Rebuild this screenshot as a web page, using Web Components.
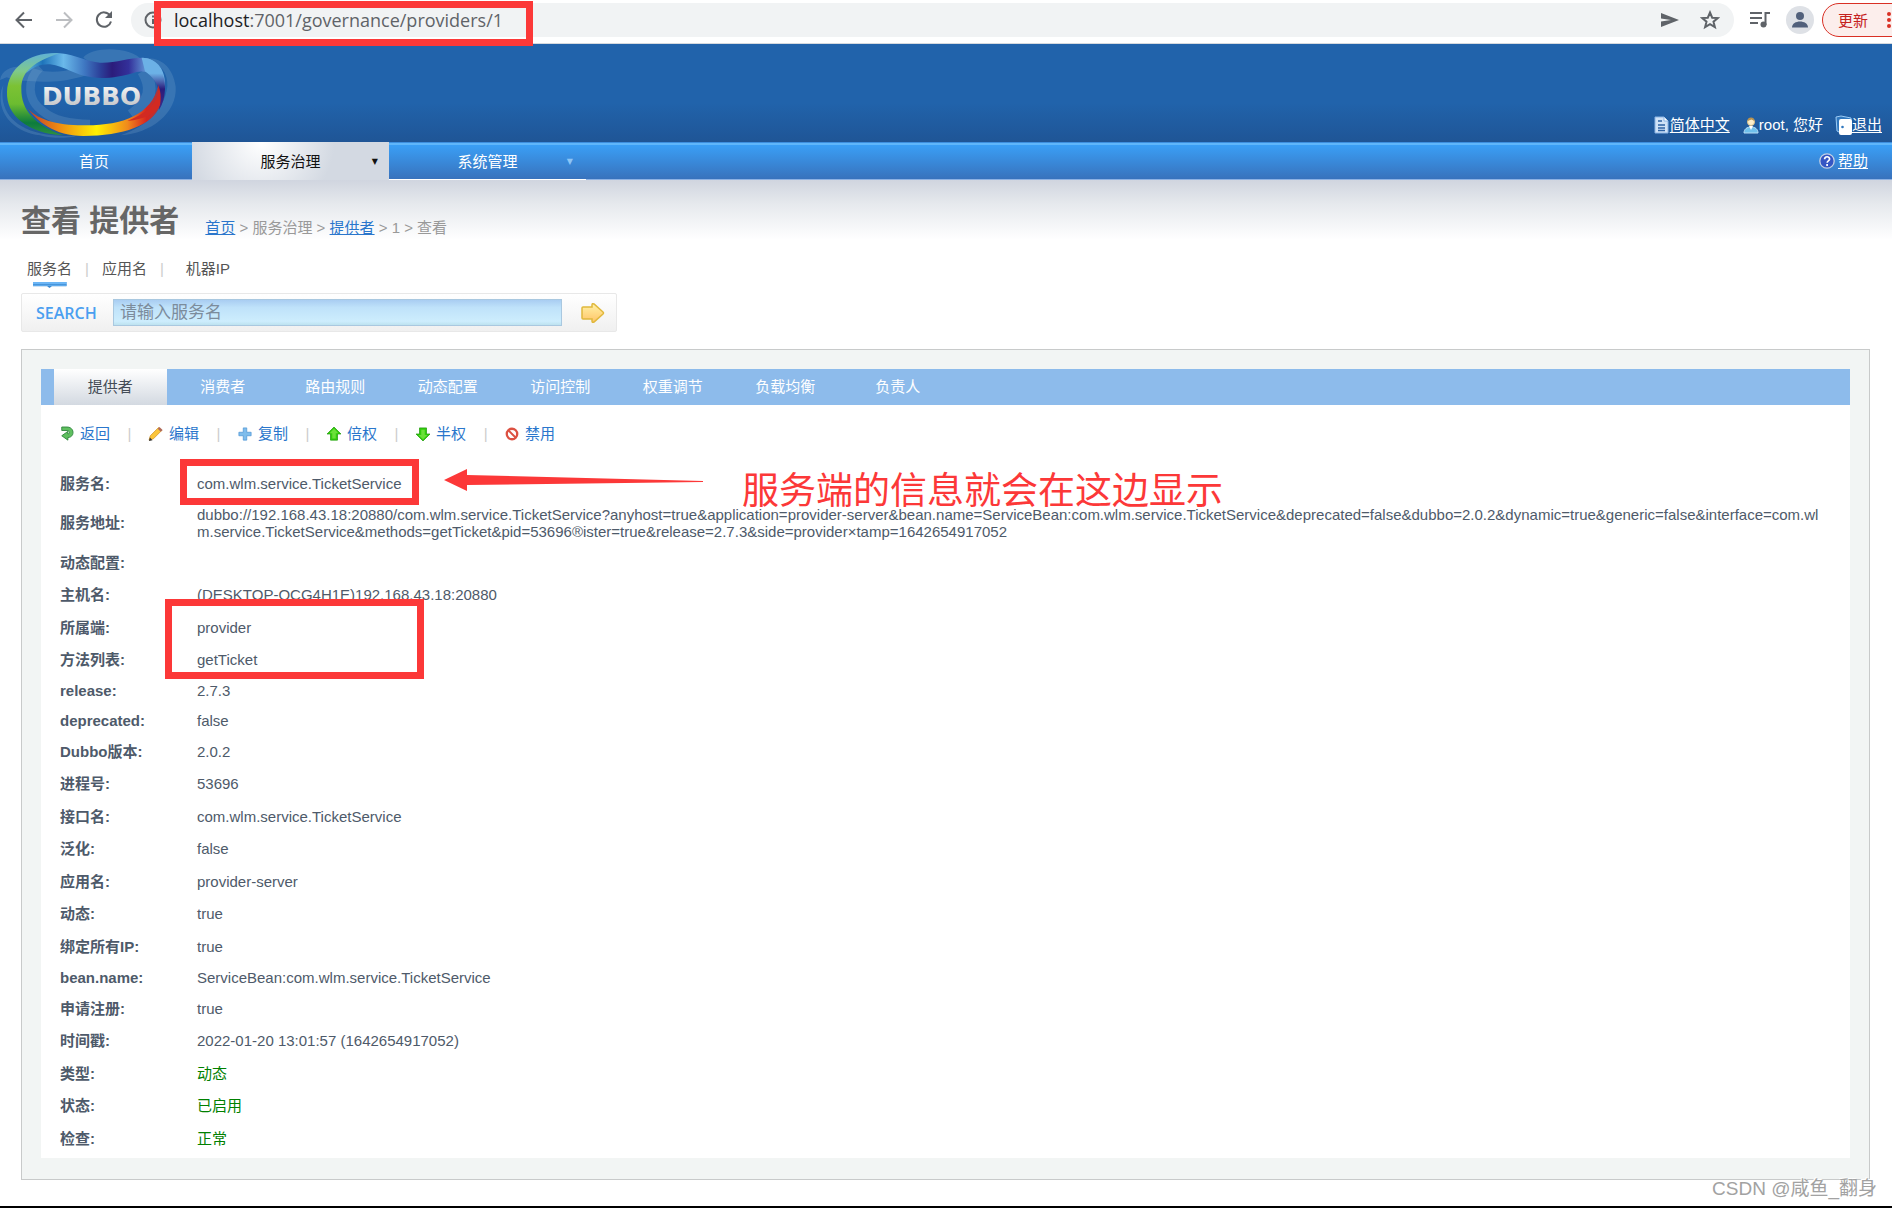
<!DOCTYPE html>
<html lang="zh-CN">
<head>
<meta charset="utf-8">
<title>Dubbo 查看 提供者</title>
<style>
  html, body { margin: 0; }
  body {
    --cjk: "Noto Sans CJK SC", sans-serif;
    --ink: #4e5a6a;
    --blue: #2a76cc;
    --mark: #fc3838;
    font: 15px/20px "Liberation Sans", var(--cjk);
    color: var(--ink);
    background: #fff;
  }
</style>
</head>
<body>
<governance-page></governance-page>

<script>
const define = (name, html, setup) => {
  const template = document.createElement('template');
  template.innerHTML = html;
  customElements.define(name, class extends HTMLElement {
    constructor() {
      super();
      this.attachShadow({ mode: 'open' }).append(template.content.cloneNode(true));
    }
    connectedCallback() { if (setup) setup(this, this.shadowRoot); }
  });
};

/* Small pictograms used by links and toolbar actions */
const ICONS = {
  doc: '<path d="M1 0h9l4 4v12H1z" fill="#cfe2f7" stroke="#8bb4e4"/><path d="M10 0v4h4" fill="#fff" stroke="#8bb4e4"/><path d="M4 4h4M4 8h7M4 11h7M4 13.500h7" stroke="#2c62a4" stroke-width="1.500"/>',
  user: '<path d="M1 16c0-4 3-6 7-6s7 2 7 6z" fill="#6fc0ec" stroke="#b9def5"/><path d="M6 9l2 4 2-4z" fill="#fff"/><circle cx="8" cy="5" r="3.500" fill="#fbeecb" stroke="#d8c08a"/><path d="M4.500 4a3.500 3.500 0 0 1 7 0L8.500 2.500z" fill="#b8924e"/>',
  door: '<path d="M0 0l5-1 10 2v3H5v12l-4-2z" fill="#2f77be" stroke="#9dccf5"/><rect x="3" y="2" width="13" height="16" rx="2" fill="#fff"/><circle cx="6.500" cy="10" r="1.300" fill="#2f77be"/>',
  help: '<circle cx="8" cy="8" r="7.200" fill="#3556c4" stroke="#c3d0e4" stroke-width="1.300"/><path d="M5.600 6.300c0-3.400 5-3.300 5-.3 0 1.900-2.400 1.800-2.400 3.700M8.100 11v2" fill="none" stroke="#fff" stroke-width="1.700"/>',
  back: '<path d="M2 0h6c9 0 9 12 1 12v3L2 10l7-5v3c3 0 2-4-1-4H2z" fill="#5fbf5f" stroke="#2b843a"/>',
  edit: '<path d="M0 15l1.500-5L11 0.500l3.500 3.500L5 13.500z" fill="#fbc53a" stroke="#d18c1b" stroke-width=".8"/><path d="M10 2l2-2 3.500 3.500-2 2z" fill="#b06a5a"/><path d="M0 16l1-4 3 3z" fill="#333"/>',
  copy: '<path d="M6 1h4v5h5v4h-5v5H6v-5H1V6h5z" fill="#7fbdec" stroke="#4a94d4" stroke-width=".8"/>',
  up: '<path d="M8 0l8 8h-4v7H4V8H0z" fill="#33cc0c" stroke="#1c9a08" stroke-width=".8"/><path d="M8 2l5 5h-3v6H6V7H3z" fill="#6be03a"/>',
  down: '<path d="M8 16l8-8h-4V1H4v7H0z" fill="#33cc0c" stroke="#1c9a08" stroke-width=".8"/><path d="M8 14l5-5h-3V3H6v6H3z" fill="#6be03a"/>',
  ban: '<circle cx="8" cy="8" r="6" fill="#fff" stroke="#dc5142" stroke-width="2.600"/><path d="M4 4l8 8" stroke="#dc5142" stroke-width="2.200"/>'
};

define('pict-icon', `
<style>:host{display:inline-flex;width:var(--pict,16px);height:var(--pict,16px);flex:none}svg{width:100%;height:100%;overflow:visible}</style>
<svg viewBox="0 0 16 16" fill="none" aria-hidden="true"></svg>`,
(el, root) => { root.querySelector('svg').innerHTML = ICONS[el.getAttribute('name')]; });

define('icon-link', `
<style>
  :host{display:flex;align-items:center}
  a{color:inherit;display:flex;align-items:center;gap:var(--icon-gap,0px);text-decoration:none}
  span.text{text-decoration:var(--deco,underline);text-underline-offset:2px}
  :host([plain]) span.text{text-decoration:none}
</style>
<a href="#"><pict-icon></pict-icon><span class="text"><slot></slot></span></a>`,
(el, root) => {
  const icon = document.createElement('pict-icon');
  icon.setAttribute('name', el.getAttribute('icon'));
  root.querySelector('pict-icon').replaceWith(icon);
});

define('browser-bar', `
<style>
  :host{display:flex;align-items:center;height:43px;border-bottom:1px solid #d5d9de;background:#fff;overflow:hidden;color:#5f6368}
  .inner{display:flex;align-items:center;flex:1;height:34px;margin-bottom:3px}
  button{border:0;background:none;padding:0;display:flex;align-items:center;justify-content:center;width:40px;height:34px;flex:none}
  nav{display:flex;padding:0 7px 0 4px}
  .omni{flex:1;height:34px;border-radius:17px;background:#f1f3f4;display:flex;align-items:center;box-sizing:border-box;padding:0 4px 0 10px;min-width:0}
  .url{flex:1;margin-left:15px;font:18px/24px "Open Sans","Noto Sans",sans-serif;white-space:nowrap;outline:0}
  .url b{font-weight:400;color:#202124}
  .tools{display:flex;padding-left:6px}
  .avatar{width:28px;height:28px;border-radius:50%;background:#dee1e6;margin:3px 8px 0 6px;overflow:hidden}
  .update{width:96px;margin-right:-26px;border:1px solid #d93025;border-radius:17px;background:#fceeec;color:#c5221f;font:15px/20px "Noto Sans CJK SC",sans-serif;justify-content:flex-start;padding-left:15px;gap:18px}
</style>
<div class="inner">
<nav>
  <button aria-label="后退"><svg width="18" height="18" fill="none" stroke="#5f6368" stroke-width="2"><path d="M17 9H2M9 1.500L1.500 9 9 16.500"/></svg></button>
  <button aria-label="前进"><svg width="18" height="18" fill="none" stroke="#bcbec1" stroke-width="2"><path d="M1 9h15M9 1.500L16.500 9 9 16.500"/></svg></button>
  <button aria-label="刷新"><svg width="18" height="18" fill="none" stroke="#5f6368" stroke-width="2"><path d="M15 4.500A7.200 7.200 0 1 0 16 10.500"/><path d="M17 0v7h-7z" fill="#5f6368" stroke="none"/></svg></button>
</nav>
<div class="omni">
  <svg width="18" height="18" fill="none" stroke="#5f6368" stroke-width="2" overflow="visible"><circle cx="12" cy="9" r="7.500"/><path d="M12 8v5M12 4.500v2"/></svg>
  <div class="url" role="textbox" aria-label="地址" contenteditable="true" spellcheck="false"><b>localhost</b>:7001/governance/providers/1</div>
  <button aria-label="发送"><svg width="18" height="16"><path d="M0 1l18 7-18 7V9.500L10 8 0 6.500z" fill="#5f6368"/></svg></button>
  <button aria-label="收藏"><svg width="20" height="20" fill="none" stroke="#5f6368" stroke-width="2"><path d="M10 2.500l2.200 5.200 5.600.4-4.300 3.600 1.400 5.500L10 14.200l-4.900 3 1.400-5.500L2.200 8.100l5.600-.4z"/></svg></button>
</div>
<div class="tools">
  <button aria-label="媒体"><svg width="20" height="18" fill="none" stroke="#5f6368" stroke-width="2"><path d="M0 2h12M0 7h12M0 12h8M20 2h-4.500v12"/><circle cx="13.500" cy="13.500" r="3" fill="#5f6368" stroke="none"/></svg></button>
  <button class="avatar" aria-label="用户"><svg width="28" height="28"><circle cx="14" cy="10" r="4" fill="#51607b"/><path d="M6 21.500c0-8 16-8 16 0z" fill="#51607b"/></svg></button>
  <button class="update">更新<svg width="6" height="18" fill="#d93025"><circle cx="3" cy="3" r="2"/><circle cx="3" cy="9" r="2"/><circle cx="3" cy="15" r="2"/></svg></button>
</div>
</div>`);

define('dubbo-logo', `
<style>:host{display:block;width:180px;height:98px}svg{display:block}text{font:bold 74px "DejaVu Sans",sans-serif}</style>
<svg width="180" height="98" viewBox="0 12 540 294" role="img" aria-label="Dubbo">
  <defs>
    <linearGradient id="g" x1="0" y1="0" x2="0" y2="1"><stop offset="0" stop-color="#5fb1d6"/><stop offset=".22" stop-color="#7fc98c"/><stop offset=".4" stop-color="#7cc234"/><stop offset=".62" stop-color="#6cbc30"/><stop offset=".85" stop-color="#0c7b3d"/><stop offset="1" stop-color="#2f9040"/></linearGradient>
    <linearGradient id="b"><stop offset="0" stop-color="#5fb1d6"/><stop offset=".12" stop-color="#1e74bb"/><stop offset=".27" stop-color="#6ab9ea"/><stop offset=".42" stop-color="#3f78c2"/><stop offset=".54" stop-color="#2b3e98"/><stop offset=".62" stop-color="#2b1c7b"/><stop offset=".74" stop-color="#33309a"/><stop offset=".9" stop-color="#6cb1e6"/><stop offset="1" stop-color="#6cb1e6"/></linearGradient>
    <linearGradient id="v" x1="0" y1="0" x2="0" y2="1"><stop offset="0" stop-color="#6cb1e6"/><stop offset=".3" stop-color="#6cb1e6"/><stop offset=".6" stop-color="#2b1c7b"/><stop offset="1" stop-color="#3b2c8b"/></linearGradient>
    <linearGradient id="r"><stop offset="0" stop-color="#b8352c"/><stop offset=".25" stop-color="#ee8a12"/><stop offset=".53" stop-color="#fff000"/><stop offset=".76" stop-color="#f08a1c"/><stop offset=".9" stop-color="#d8261f"/><stop offset="1" stop-color="#a33a44"/></linearGradient>
    <linearGradient id="t" x1="0" y1="0" x2="0" y2="1"><stop offset="0" stop-color="#fff"/><stop offset="1" stop-color="#b9bcc0"/></linearGradient>
  </defs>
  <g fill="#8fb4d6" fill-opacity=".22">
    <path d="M0 120C8 78 60 72 110 88c60 20 120-5 170-15l-30-20C270 20 390 15 428 62l-60 30C300 80 230 130 130 125 90 125 50 122 20 112z"/>
    <path d="M10 135C-5 210 40 275 160 286c30 3 50 3 70 0-2 8-70 12-110 0C40 275-10 220 4 150z"/>
    <path d="M435 55c50-5 85 30 92 85 5 80-75 140-165 146 80-30 130-75 140-146 3-40-20-70-67-85z"/>
  </g>
  <g fill="none" stroke="#8fb4d6" stroke-opacity=".22">
    <path d="M120 82C80 120 80 180 130 215c30 25 80 37 140 37" stroke-width="26"/>
    <path d="M430 92c30 50 25 90-35 135" stroke-width="38"/>
  </g>
  <path d="M78 100C105 50 140 37 180 40c50 5 80 26 120 28 45 2 85-15 130-15 45 5 68 40 64 85-25-30-50-50-84-42C355 112 315 118 275 112 220 105 195 78 150 73c-25-2-50 8-72 27z" fill="url(#b)"/>
  <path d="M180 39C90 34 25 80 21 155c-3 70 60 125 170 131-85-30-128-75-127-140C64 105 85 70 180 39z" fill="url(#g)"/>
  <path d="M75 195c30 45 100 62 180 61 110 1 200-30 220-120l5 60c-20 60-110 92-230 92C165 288 110 245 75 195z" fill="url(#r)"/>
  <path d="M425 53c45 0 72 40 70 95-1 25-7 45-18 62 5-50 2-85-42-116z" fill="url(#v)"/>
  <path d="M474 135c5 50-25 80-92 108 50-5 85-20 98-47 4-25 2-45-6-61z" fill="#d22a22"/>
  <text x="126" y="194" fill="url(#t)">DUBBO</text>
</svg>`);

define('site-header', `
<style>
  :host{display:flex;justify-content:space-between;align-items:flex-end;height:98px;background:linear-gradient(#2163ab 60%,#1f5596);color:#fff}
  .links{display:flex;gap:13px;padding:0 10px 7px 0}
</style>
<dubbo-logo></dubbo-logo>
<div class="links">
  <icon-link icon="doc">简体中文</icon-link>
  <icon-link icon="user" plain>root, 您好</icon-link>
  <icon-link icon="door">退出</icon-link>
</div>`);

define('site-nav', `
<style>
  :host{display:flex;height:38px;box-sizing:border-box;border-top:1px solid #3d8fdf;border-bottom:1px solid #8db1e3;background:linear-gradient(#5fb6fb 2px,#3a9ff6 2px,#3872bc);color:#fff;justify-content:space-between}
  nav{display:flex;margin-bottom:-1px;margin-top:-1px}
  a.item{display:grid;grid-template-columns:1fr 60px 1fr;align-items:center;width:197px;box-sizing:border-box;color:inherit;text-decoration:none;white-space:nowrap;padding-top:1px}
  a.item:first-child{width:192px;padding-right:4px;display:flex;justify-content:center}
  a i{font:normal 8px/20px "DejaVu Sans";justify-self:end;padding-right:11px;color:#8cc5f6}
  a.sub i{padding-right:13px}
  a.on{color:#111;background:radial-gradient(circle at 35% 0,#fff,#d3d9e2 55%)}
  a.on i{color:#111}
  a.sub{border-bottom:1px solid #fff;padding-top:3px}
  .help{padding:0 24px 0 0;--icon-gap:3px;display:flex}
</style>
<nav><a class="item" href="#">首页</a><a class="item on" href="#"><span></span>服务治理<i>▼</i></a><a class="item sub" href="#"><span></span>系统管理<i>▼</i></a></nav>
<icon-link class="help" icon="help">帮助</icon-link>`);

define('page-heading', `
<style>
  :host{display:flex;gap:26px;height:44px}
  h1{margin:0;font:bold 30px/46px "Liberation Sans","Noto Sans CJK SC",sans-serif;color:#666;white-space:nowrap}
  p{margin:0;color:#999;white-space:nowrap;padding-top:20px}
  ::slotted(a){color:var(--blue)}
</style>
<h1><slot name="title"></slot></h1><p><slot></slot></p>`);

define('service-search', `
<style>
  :host{display:block}
  ul{list-style:none;margin:0;padding:0 0 0 6px;display:flex;height:36px;color:#555}
  li{display:flex;line-height:20px;padding-top:2px}
  li+li::before{content:"|";color:#ccc;padding:0 13px}
  li:last-child::before{padding-right:22px}
  a{color:inherit;text-decoration:none;display:flex;flex-direction:column;align-items:center}
  a.on::after{content:"";width:34px;height:6px;margin-top:3px;background:linear-gradient(#6bb5f5 2px,#3c8bd2 2px,#6bb5f5 4px,transparent 4px),#3c8bd2;clip-path:polygon(0 0,100% 0,100% 70%,57% 70%,50% 100%,43% 70%,0 70%)}
  form{display:flex;align-items:center;width:596px;height:39px;box-sizing:border-box;border:1px solid #e8e8e8;border-radius:2px;background:linear-gradient(#fff,#f0f0f0);padding-left:14px}
  label{font:600 16px/20px "Open Sans",sans-serif;color:#4a9ff0;width:77px}
  input{width:449px;height:27px;box-sizing:border-box;border:1px solid #a9c8e0;padding:1px 6px 0;margin:0;background:linear-gradient(#a9cdf2,#bfe2fa 30%,#cdedfd 85%,#bde2ef);font:17px/24px "Liberation Sans","Noto Sans CJK SC",sans-serif;border-radius:0}
  input::placeholder{color:#7c8c9c}
  button{border:0;background:none;padding:0;margin-left:19px;display:flex}
</style>
<ul><li><a class="on" href="#">服务名</a></li><li><a href="#">应用名</a></li><li><a href="#">机器IP</a></li></ul>
<form onsubmit="return false"><label for="q">SEARCH</label><input id="q" placeholder="请输入服务名">
<button aria-label="搜索"><svg width="24" height="20"><defs><linearGradient id="a" x1="0" y1="0" x2="0" y2="1"><stop offset="0" stop-color="#fff2a8"/><stop offset="1" stop-color="#ffc468"/></linearGradient></defs><path d="M1 5q0-1 1-1h9V2q0-2 2-1l9 8q1 1 0 2l-9 8q-2 1-2-1v-2H2q-1 0-1-1z" fill="url(#a)" stroke="#e0b83c" stroke-width="1.500"/></svg></button></form>`);

define('tab-strip', `
<style>
  :host{display:block;background:#8dbbeb;padding-left:13px}
  nav{display:grid;grid-template-columns:repeat(8,1fr);width:900px;height:36px}
  ::slotted(a){display:flex;align-items:center;justify-content:center;color:#fff;text-decoration:none}
  ::slotted(a[aria-current]){color:#444c56;background:linear-gradient(#fff,#d3d9e1)}
</style>
<nav><slot></slot></nav>`);

define('action-bar', `
<style>
  :host{display:flex;height:20px;color:var(--blue);--pict:14px;--icon-gap:6px;--deco:none}
  ::slotted(icon-link:not(:last-child))::after{content:"|";color:#ccc;font-size:15px;width:39px;text-align:center}
</style><slot></slot>`);

const ROWS = [
  ['服务名:', 'com.wlm.service.TicketService'],
  ['服务地址:', 'dubbo://192.168.43.18:20880/com.wlm.service.TicketService?anyhost=true&application=provider-server&bean.name=ServiceBean:com.wlm.service.TicketService&deprecated=false&dubbo=2.0.2&dynamic=true&generic=false&interface=com.wlm.service.TicketService&methods=getTicket&pid=53696®ister=true&release=2.7.3&side=provider×tamp=1642654917052', 'tall'],
  ['动态配置:', ''],
  ['主机名:', '(DESKTOP-QCG4H1E)192.168.43.18:20880'],
  ['所属端:', 'provider'],
  ['方法列表:', 'getTicket'],
  ['release:', '2.7.3', 'latin'],
  ['deprecated:', 'false', 'latin'],
  ['Dubbo版本:', '2.0.2'],
  ['进程号:', '53696'],
  ['接口名:', 'com.wlm.service.TicketService'],
  ['泛化:', 'false'],
  ['应用名:', 'provider-server'],
  ['动态:', 'true'],
  ['绑定所有IP:', 'true'],
  ['bean.name:', 'ServiceBean:com.wlm.service.TicketService', 'latin'],
  ['申请注册:', 'true'],
  ['时间戳:', '2022-01-20 13:01:57 (1642654917052)'],
  ['类型:', '动态', 'ok'],
  ['状态:', '已启用', 'ok'],
  ['检查:', '正常', 'ok']
];

define('provider-table', `
<style>
  :host{display:block}
  table{border-collapse:collapse;width:100%;table-layout:fixed}
  th,td{padding:0;height:32px;line-height:17px;text-align:left;vertical-align:middle}
  th{width:137px;font-weight:bold}
  tr:nth-child(even)>*{height:33px}
  tr.latin>*{height:30px}
  tr.latin:nth-child(odd)>*{height:29px}
  tr.tall>*{height:47px}
  td{word-break:break-all}
  tr.ok td{color:#008000}
</style>
<table><tbody></tbody></table>`,
(el, root) => {
  const body = root.querySelector('tbody');
  for (const [label, value, kind] of ROWS) {
    const row = body.insertRow();
    if (kind) row.className = kind;
    const th = document.createElement('th');
    th.scope = 'row';
    th.textContent = label;
    row.append(th);
    row.insertCell().textContent = value;
  }
});

define('content-panel', `
<style>
  :host{display:block;border:1px solid #c8caca;background:#f2f5f4;padding:19px 19px 21px}
  .sheet{background:#fff;padding:19px 20px 4px 19px}
</style>
<slot name="tabs"></slot><div class="sheet"><slot></slot></div>`);

/* Hand-drawn marks that float over the page */
define('red-marks', `
<style>
  :host{position:absolute;inset:0;pointer-events:none;overflow:hidden}
  div,svg,p{position:absolute;box-sizing:border-box;margin:0}
  div{border:7px solid var(--mark)}
  .url{left:154px;top:1px;width:379px;height:45px}
  .name{left:180px;top:459px;width:239px;height:46px}
  .method{left:165px;top:599px;width:259px;height:80px}
  svg{left:444px;top:469px}
  p{left:742px;top:470px;font:37px/36px "Noto Sans CJK SC",sans-serif;color:var(--mark);white-space:nowrap}
</style>
<div class="url"></div><div class="name"></div><div class="method"></div>
<svg width="260" height="22"><path d="M0 11L23 0v6l236 6v1L23 16v6z" fill="#fc3838"/></svg>
<p>服务端的信息就会在这边显示</p>`);

define('water-mark', `
<style>:host{position:absolute;right:15px;bottom:4px;font:19px/26px "Liberation Sans","Noto Sans CJK SC",sans-serif;color:#a2a2a2;text-shadow:1px 1px 0 #fff,-1px -1px 0 #fff;white-space:nowrap}</style>
<slot></slot>`);

define('governance-page', `
<style>
  :host{display:flex;flex-direction:column;position:relative;min-height:100vh;box-sizing:border-box;border-bottom:2px solid #000}
  main{flex:1;padding:18px 22px 20px 21px;background:linear-gradient(#d0d5df,#e6e9ed 24px,#fff 60px)}
  service-search{margin-top:15px}
  content-panel{margin-top:17px}
  action-bar{margin-bottom:23px}
</style>
<browser-bar></browser-bar>
<site-header></site-header>
<site-nav></site-nav>
<main>
  <page-heading><span slot="title">查看 提供者</span><a href="#">首页</a> &gt; 服务治理 &gt; <a href="#">提供者</a> &gt; 1 &gt; 查看</page-heading>
  <service-search></service-search>
  <content-panel>
    <tab-strip slot="tabs"><a href="#" aria-current="page">提供者</a><a href="#">消费者</a><a href="#">路由规则</a><a href="#">动态配置</a><a href="#">访问控制</a><a href="#">权重调节</a><a href="#">负载均衡</a><a href="#">负责人</a></tab-strip>
    <action-bar><icon-link icon="back">返回</icon-link><icon-link icon="edit">编辑</icon-link><icon-link icon="copy">复制</icon-link><icon-link icon="up">倍权</icon-link><icon-link icon="down">半权</icon-link><icon-link icon="ban">禁用</icon-link></action-bar>
    <provider-table></provider-table>
  </content-panel>
</main>
<red-marks></red-marks>
<water-mark>CSDN @咸鱼_翻身</water-mark>`);
</script>
</body>
</html>
